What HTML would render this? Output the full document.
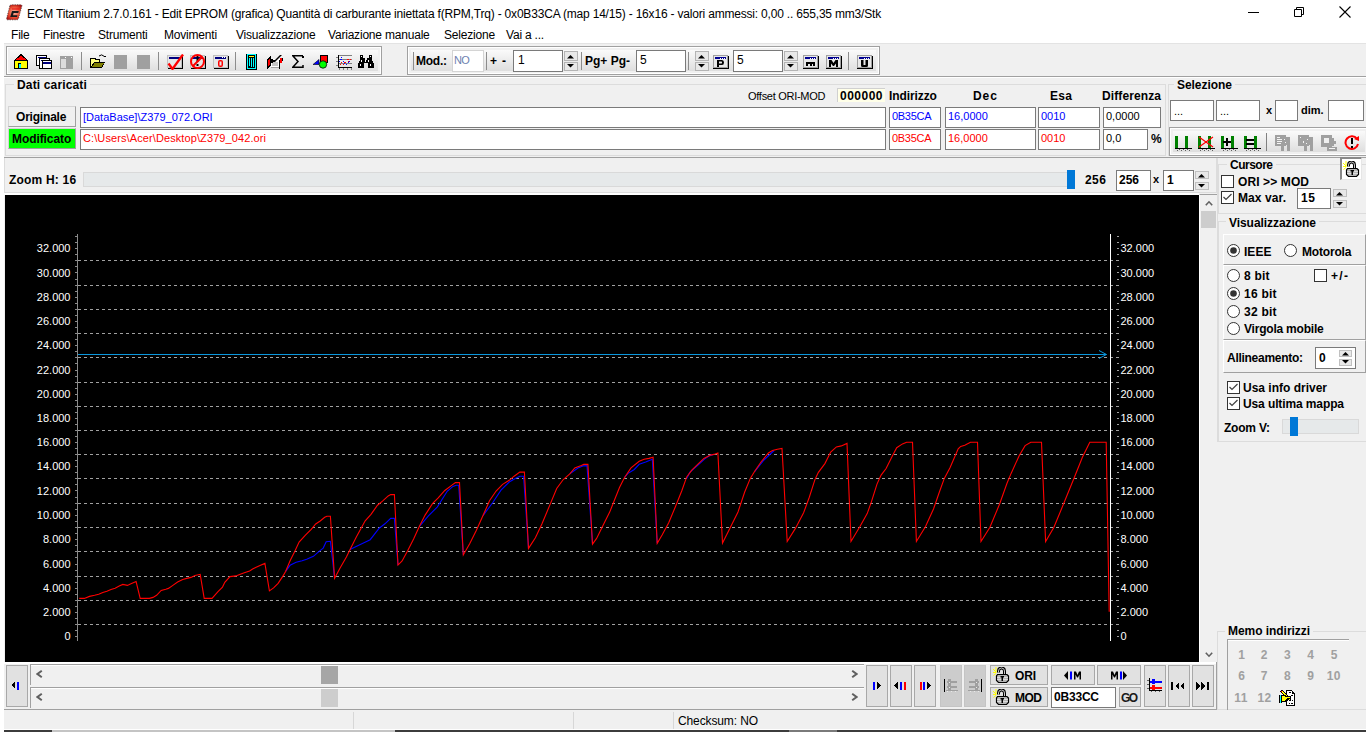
<!DOCTYPE html>
<html><head><meta charset="utf-8">
<style>
*{box-sizing:border-box;margin:0;padding:0}
html,body{width:1366px;height:732px;overflow:hidden;background:#f0f0f0;font-family:"Liberation Sans",sans-serif;color:#000}
.a{position:absolute}
.t{position:absolute;white-space:nowrap;line-height:1}
.b{font-weight:bold}
.fld{position:absolute;background:#fff;border:1px solid #7a7a7a}
.grp{position:absolute;border:1px solid #dcdcdc}
.btn{position:absolute;background:#e1e1e1;border:1px solid #adadad}
.spin{position:absolute;}
.spin i{position:absolute;left:0;width:100%;height:50%;background:#e6e6e6;border:1px solid #c8c8c8}
.tb{position:absolute;top:46px;height:29px;border:1px solid #a0a0a0;background:#f0f0f0}
.tb:before{content:"";position:absolute;left:0;top:0;right:0;bottom:0;border:1px solid #fff}
.tb:after{content:"";position:absolute;left:3px;top:3px;right:3px;bottom:3px;background:linear-gradient(#fafafa,#dedede)}
.sep{position:absolute;width:1px;background:#8c8c8c}
</style></head><body>
<!-- title bar + menu -->
<div class="a" style="left:0;top:0;width:1366px;height:43px;background:#fff"></div>
<div class="a" style="left:0;top:43px;width:1366px;height:1px;background:#e6e6e6"></div>
<div class="t" style="left:27px;top:8px;font-size:12px;letter-spacing:-0.19px">ECM Titanium 2.7.0.161 - Edit EPROM (grafica) Quantità di carburante iniettata f(RPM,Trq) - 0x0B33CA (map 14/15) - 16x16 - valori ammessi: 0,00 .. 655,35 mm3/Stk</div>
<div class="t" style="left:11px;top:29px;font-size:12px;letter-spacing:-0.2px">File</div>
<div class="t" style="left:43px;top:29px;font-size:12px;letter-spacing:-0.2px">Finestre</div>
<div class="t" style="left:98px;top:29px;font-size:12px;letter-spacing:-0.2px">Strumenti</div>
<div class="t" style="left:164px;top:29px;font-size:12px;letter-spacing:-0.2px">Movimenti</div>
<div class="t" style="left:236px;top:29px;font-size:12px;letter-spacing:-0.2px">Visualizzazione</div>
<div class="t" style="left:328px;top:29px;font-size:12px;letter-spacing:-0.2px">Variazione manuale</div>
<div class="t" style="left:444px;top:29px;font-size:12px;letter-spacing:-0.2px">Selezione</div>
<div class="t" style="left:506px;top:29px;font-size:12px;letter-spacing:-0.2px">Vai a ...</div>

<!-- left white strip -->
<div class="a" style="left:0;top:43px;width:4px;height:689px;background:#fff"></div>

<!-- chart black -->
<!-- CHART -->
<svg class="a" style="left:5px;top:195px" width="1195" height="467" viewBox="5 195 1195 467">
<rect x="5" y="195" width="1195" height="467" fill="#000"/>
<path d="M78 260.5H1119.5 M78 285.5H1119.5 M78 309.5H1119.5 M78 333.5H1119.5 M78 357.5H1119.5 M78 382.5H1119.5 M78 406.5H1119.5 M78 430.5H1119.5 M78 454.5H1119.5 M78 478.5H1119.5 M78 503.5H1119.5 M78 527.5H1119.5 M78 551.5H1119.5 M78 576.5H1119.5 M78 600.5H1119.5 M78 624.5H1119.5" stroke="#a0a0a0" stroke-width="1" stroke-dasharray="3 3" fill="none" shape-rendering="crispEdges"/>
<path d="M77.5 234V641" stroke="#8a8a8a" stroke-width="1" shape-rendering="crispEdges"/>
<path d="M75 236.5H77 M75 242.5H77 M75 248.5H77 M75 254.5H77 M75 260.5H77 M75 266.5H77 M75 272.5H77 M75 279.5H77 M75 285.5H77 M75 291.5H77 M75 297.5H77 M75 303.5H77 M75 309.5H77 M75 315.5H77 M75 321.5H77 M75 327.5H77 M75 333.5H77 M75 339.5H77 M75 345.5H77 M75 351.5H77 M75 357.5H77 M75 363.5H77 M75 370.5H77 M75 376.5H77 M75 382.5H77 M75 388.5H77 M75 394.5H77 M75 400.5H77 M75 406.5H77 M75 412.5H77 M75 418.5H77 M75 424.5H77 M75 430.5H77 M75 436.5H77 M75 442.5H77 M75 448.5H77 M75 454.5H77 M75 460.5H77 M75 466.5H77 M75 472.5H77 M75 478.5H77 M75 484.5H77 M75 490.5H77 M75 497.5H77 M75 503.5H77 M75 509.5H77 M75 515.5H77 M75 521.5H77 M75 527.5H77 M75 533.5H77 M75 539.5H77 M75 545.5H77 M75 551.5H77 M75 557.5H77 M75 564.5H77 M75 570.5H77 M75 576.5H77 M75 582.5H77 M75 588.5H77 M75 594.5H77 M75 600.5H77 M75 606.5H77 M75 612.5H77 M75 618.5H77 M75 624.5H77 M75 630.5H77 M75 636.5H77" stroke="#8a8a8a" stroke-width="1" shape-rendering="crispEdges"/>
<path d="M1117 236.5H1119 M1117 242.5H1119 M1117 248.5H1119 M1117 254.5H1119 M1117 260.5H1119 M1117 266.5H1119 M1117 272.5H1119 M1117 279.5H1119 M1117 285.5H1119 M1117 291.5H1119 M1117 297.5H1119 M1117 303.5H1119 M1117 309.5H1119 M1117 315.5H1119 M1117 321.5H1119 M1117 327.5H1119 M1117 333.5H1119 M1117 339.5H1119 M1117 345.5H1119 M1117 351.5H1119 M1117 357.5H1119 M1117 363.5H1119 M1117 370.5H1119 M1117 376.5H1119 M1117 382.5H1119 M1117 388.5H1119 M1117 394.5H1119 M1117 400.5H1119 M1117 406.5H1119 M1117 412.5H1119 M1117 418.5H1119 M1117 424.5H1119 M1117 430.5H1119 M1117 436.5H1119 M1117 442.5H1119 M1117 448.5H1119 M1117 454.5H1119 M1117 460.5H1119 M1117 466.5H1119 M1117 472.5H1119 M1117 478.5H1119 M1117 484.5H1119 M1117 490.5H1119 M1117 497.5H1119 M1117 503.5H1119 M1117 509.5H1119 M1117 515.5H1119 M1117 521.5H1119 M1117 527.5H1119 M1117 533.5H1119 M1117 539.5H1119 M1117 545.5H1119 M1117 551.5H1119 M1117 557.5H1119 M1117 564.5H1119 M1117 570.5H1119 M1117 576.5H1119 M1117 582.5H1119 M1117 588.5H1119 M1117 594.5H1119 M1117 600.5H1119 M1117 606.5H1119 M1117 612.5H1119 M1117 618.5H1119 M1117 624.5H1119 M1117 630.5H1119 M1117 636.5H1119" stroke="#a0a0a0" stroke-width="1" shape-rendering="crispEdges"/>
<path d="M1110.5 234V641" stroke="#fff" stroke-width="1" shape-rendering="crispEdges"/>
<g fill="#fff" font-family="Liberation Sans" font-size="11px"><text x="70.5" y="251.5" text-anchor="end">32.000</text><text x="1120.5" y="251.5">32.000</text><text x="70.5" y="276.5" text-anchor="end">30.000</text><text x="1120.5" y="276.5">30.000</text><text x="70.5" y="300.5" text-anchor="end">28.000</text><text x="1120.5" y="300.5">28.000</text><text x="70.5" y="324.5" text-anchor="end">26.000</text><text x="1120.5" y="324.5">26.000</text><text x="70.5" y="348.5" text-anchor="end">24.000</text><text x="1120.5" y="348.5">24.000</text><text x="70.5" y="373.5" text-anchor="end">22.000</text><text x="1120.5" y="373.5">22.000</text><text x="70.5" y="397.5" text-anchor="end">20.000</text><text x="1120.5" y="397.5">20.000</text><text x="70.5" y="421.5" text-anchor="end">18.000</text><text x="1120.5" y="421.5">18.000</text><text x="70.5" y="445.5" text-anchor="end">16.000</text><text x="1120.5" y="445.5">16.000</text><text x="70.5" y="469.5" text-anchor="end">14.000</text><text x="1120.5" y="469.5">14.000</text><text x="70.5" y="494.5" text-anchor="end">12.000</text><text x="1120.5" y="494.5">12.000</text><text x="70.5" y="518.5" text-anchor="end">10.000</text><text x="1120.5" y="518.5">10.000</text><text x="70.5" y="542.5" text-anchor="end">8.000</text><text x="1120.5" y="542.5">8.000</text><text x="70.5" y="567.5" text-anchor="end">6.000</text><text x="1120.5" y="567.5">6.000</text><text x="70.5" y="591.5" text-anchor="end">4.000</text><text x="1120.5" y="591.5">4.000</text><text x="70.5" y="615.5" text-anchor="end">2.000</text><text x="1120.5" y="615.5">2.000</text><text x="70.5" y="639.5" text-anchor="end">0</text><text x="1120.5" y="639.5">0</text></g>
<path d="M78 354.5H1106.5 M1099 350.5L1106.5 354.5L1099 358.5" stroke="#0a96dc" stroke-width="1" fill="none"/>
<polyline points="285.6,571.4 290.1,565.3 296.1,562.3 302.1,560.8 306.7,559.3 313.4,556.3 319.4,551.1 323.2,548.1 326.2,541.8 330.4,541.3 334.6,578.2" stroke="#0000ff" stroke-width="1.1" fill="none"/>
<polyline points="350.0,549.5 360.3,544.6 370.2,539.7 379.2,528.2 384.9,523.8 390.7,518.4 394.4,518.4 398.0,565.1" stroke="#0000ff" stroke-width="1.1" fill="none"/>
<polyline points="419.3,526.6 428.4,515.9 437.4,506.9 447.2,491.3 453.0,486.4 456.2,485.2 458.7,485.2 463.3,554.9" stroke="#0000ff" stroke-width="1.1" fill="none"/>
<polyline points="483.0,515.6 492.8,502.5 501.0,490.2 509.2,482.0 515.7,478.2 519.8,476.2 523.6,476.2 528.5,548.4" stroke="#0000ff" stroke-width="1.1" fill="none"/>
<polyline points="569.8,473.8 578.0,468.0 583.0,465.9 587.0,465.6 592.5,544.1" stroke="#0000ff" stroke-width="1.1" fill="none"/>
<polyline points="624.4,477.7 627.7,473.6 634.3,469.5 639.2,464.3 645.7,462.1 652.3,459.3 657.2,543.3" stroke="#0000ff" stroke-width="1.1" fill="none"/>
<polyline points="686.7,478.5 690.0,472.0 698.0,465.0 704.8,458.9 709.7,455.6 713.8,454.4" stroke="#0000ff" stroke-width="1.1" fill="none"/>
<polyline points="754.4,471.8 764.0,460.0 774.1,450.5" stroke="#0000ff" stroke-width="1.1" fill="none"/>
<polyline points="79.2,598.4 84.3,598.4 89.5,596.4 94.6,595.3 98.7,594.3 102.8,592.5 106.9,591.2 111.0,589.5 115.1,588.2 119.2,586.1 122.8,584.4 127.4,585.4 131.5,583.6 136.1,581.5 140.2,598.4 149.4,598.4 153.0,597.4 156.6,595.3 161.2,590.4 165.8,589.2 168.4,588.4 172.5,585.6 177.6,582.0 182.7,579.5 186.8,578.4 190.9,577.4 195.0,575.4 200.2,574.3 204.2,598.4 212.0,598.4 218.0,591.6 222.5,587.1 224.8,582.3 230.0,576.6 236.0,575.9 239.0,574.7 243.6,572.9 249.6,570.9 252.6,569.1 255.6,567.6 260.0,565.6 264.9,563.4 269.4,590.9 273.6,587.9 278.1,583.4 282.6,576.6 285.6,571.4 290.1,560.8 294.6,551.8 299.1,542.1 305.2,535.3 311.2,529.3 315.7,524.0 320.2,521.0 324.7,517.3 326.9,516.2 330.4,516.2 334.6,578.2 339.8,568.4 346.4,556.9 351.3,547.0 356.2,537.2 361.1,528.2 365.2,520.8 371.0,514.3 377.5,505.2 382.5,501.1 388.2,495.9 390.7,494.6 394.4,494.6 398.0,565.1 402.1,561.0 407.9,550.3 413.6,538.9 419.3,526.6 425.1,515.1 432.5,503.6 438.2,497.9 444.8,490.5 451.3,485.6 455.4,482.6 459.5,482.6 463.3,554.9 469.8,543.4 476.4,530.3 483.0,515.6 489.5,500.8 496.1,491.0 502.6,484.4 509.2,480.3 514.1,476.2 519.8,472.1 524.4,472.1 528.5,548.4 535.4,537.7 542.0,523.8 550.2,504.1 556.7,488.5 563.3,479.5 569.8,473.8 574.8,468.0 581.3,465.6 583.8,464.4 587.9,464.4 592.5,544.1 596.6,538.4 603.1,525.2 609.7,512.1 614.6,499.8 619.5,487.5 624.4,477.7 631.0,467.9 639.2,461.3 644.1,459.3 649.0,458.4 653.1,457.2 657.2,543.3 662.1,535.1 668.7,522.8 675.2,507.2 681.8,490.8 686.7,476.9 691.6,470.3 698.2,463.8 703.9,458.4 710.5,455.1 713.8,454.4 717.9,453.1 722.5,543.1 729.8,528.4 738.0,512.0 744.6,492.3 750.3,478.4 754.4,471.8 761.0,462.0 768.4,453.0 772.5,450.5 777.4,449.3 782.0,448.4 787.2,541.5 795.4,528.4 803.6,512.8 809.3,497.2 815.1,479.2 818.4,472.3 824.9,463.6 830.7,452.1 836.4,446.9 841.3,445.9 847.0,443.4 851.0,541.5 859.8,526.7 867.2,513.6 871.3,502.1 877.0,484.1 881.1,475.1 886.1,468.5 892.6,455.4 896.7,447.7 902.5,443.9 906.6,442.3 912.5,442.3 916.4,541.5 925.4,526.7 933.6,508.7 939.3,492.3 944.3,478.4 950.0,467.7 958.2,448.9 960.7,446.4 964.8,445.2 970.5,442.3 977.5,442.3 981.0,541.5 989.8,527.5 999.7,503.8 1007.0,483.3 1011.1,473.4 1019.3,455.4 1025.1,445.6 1030.8,442.3 1041.5,442.3 1045.6,541.5 1053.8,527.5 1063.6,503.8 1074.3,477.5 1082.5,457.0 1089.8,442.3 1106.2,442.3 1109.2,611.7" stroke="#ff0000" stroke-width="1.1" fill="none"/>
</svg>
<!-- /CHART -->


<!-- title icon -->
<svg class="a" style="left:5px;top:4px" width="18" height="17" viewBox="0 0 18 17"><defs><radialGradient id="tg" cx="0.5" cy="0.5" r="0.6"><stop offset="0" stop-color="#f8c0a8"/><stop offset="0.6" stop-color="#e84a30"/><stop offset="1" stop-color="#b01010"/></radialGradient></defs><path d="M5 1.5 Q5.5 0.8 6.5 0.8 H16 Q17.3 0.8 16.8 2.2 L13.5 14.5 Q13 15.8 11.8 15.8 H2.5 Q1.2 15.8 1.6 14.5 L4.8 2 Z" fill="url(#tg)" stroke="#333" stroke-width="0.7" stroke-dasharray="1.2 1.2"/><path d="M7 5 H14.5" stroke="#ee0a0a" stroke-width="1"/><path d="M7 7 H13.8 L13.3 9 H8.6 L8 11.3 H12.5 L12 13 H5.2 Z" fill="#1a1a1a"/></svg>
<!-- window controls -->
<div class="a" style="left:1248px;top:12px;width:11px;height:1px;background:#000"></div>
<svg class="a" style="left:1293px;top:6px" width="12" height="12" viewBox="0 0 12 12"><path d="M1.5 3.5h7v7h-7z M3.5 3.5v-2h7v7h-2" fill="none" stroke="#000" stroke-width="1"/></svg>
<svg class="a" style="left:1339px;top:6px" width="12" height="12" viewBox="0 0 12 12"><path d="M0.5 0.5L11.5 11.5M11.5 0.5L0.5 11.5" stroke="#000" stroke-width="1.1"/></svg>

<!-- toolbar strip -->
<div class="a" style="left:4px;top:43px;width:1362px;height:1px;background:#e3e3e3"></div>
<div class="a" style="left:4px;top:76px;width:1362px;height:1px;background:#a0a0a0"></div>
<div class="a" style="left:4px;top:77px;width:1362px;height:1px;background:#fff"></div>
<div class="tb" style="left:6px;width:376px"></div>
<div class="tb" style="left:407px;width:473px"></div>

<!-- toolbar icons -->
<svg class="a" style="left:13px;top:54px" width="17" height="16" viewBox="0 0 17 16" shape-rendering="crispEdges"><path d="M8 0 L16 7 L15 7 L15 15 L1 15 L1 7 L0 7 Z" fill="#000"/><path d="M8 1.5 L13.5 6 L2.5 6 Z" fill="#ff0000"/><rect x="2" y="7" width="12" height="7" fill="#ffff00"/><rect x="5" y="9" width="3" height="5" fill="#000"/><rect x="6" y="10" width="1.5" height="4" fill="#00ffff"/></svg>
<svg class="a" style="left:36px;top:55px" width="17" height="15" viewBox="0 0 17 15" shape-rendering="crispEdges"><rect x="0" y="0" width="11" height="11" fill="#000"/><rect x="1" y="1" width="9" height="9" fill="#fff"/><rect x="2" y="2" width="8" height="1" fill="#000080"/><rect x="3" y="3" width="11" height="11" fill="#000"/><rect x="4" y="4" width="9" height="9" fill="#fff"/><rect x="5" y="5" width="8" height="1" fill="#000080"/><rect x="6" y="5" width="10" height="9" fill="#000"/><rect x="7" y="6" width="8" height="7" fill="#fff"/><rect x="7" y="7" width="8" height="2" fill="#000080"/></svg>
<svg class="a" style="left:60px;top:56px" width="14" height="14" viewBox="0 0 14 14" shape-rendering="crispEdges"><rect x="0" y="0" width="13" height="13" fill="#a0a0a0"/><rect x="1" y="3" width="5" height="9" fill="#dcdcdc"/><rect x="5" y="1" width="1" height="1" fill="#fff"/><rect x="11" y="1" width="1" height="1" fill="#fff"/></svg>
<div class="sep" style="left:81px;top:52px;height:18px"></div>
<svg class="a" style="left:90px;top:54px" width="17" height="15" viewBox="0 0 17 15" shape-rendering="crispEdges"><path d="M0 4 H5 L6 5 H10 V8 H15 L12 14 H0 Z" fill="#000"/><path d="M1 5 H4.5 L5.5 6 H9 V8 H4 L1 13 Z" fill="#ffff80"/><path d="M4.5 9 H14 L11.5 13 H2 Z" fill="#808000"/><path d="M9 2 Q11.5 -0.5 14.5 2.5" fill="none" stroke="#000" stroke-width="1" shape-rendering="auto"/><path d="M13 3 H16 L15 1 Z" fill="#000"/></svg>
<svg class="a" style="left:114px;top:55px" width="14" height="14" viewBox="0 0 14 14" shape-rendering="crispEdges"><rect x="0" y="0" width="13" height="14" fill="#a0a0a0"/></svg>
<svg class="a" style="left:137px;top:55px" width="14" height="14" viewBox="0 0 14 14" shape-rendering="crispEdges"><rect x="0" y="0" width="13" height="14" fill="#a0a0a0"/></svg>
<div class="sep" style="left:158px;top:52px;height:18px"></div>
<svg class="a" style="left:167px;top:54px" width="17" height="16" viewBox="0 0 17 16" shape-rendering="auto"><rect x="0" y="1" width="15" height="13" fill="#c0c0c0"/><rect x="1" y="2" width="13" height="11" fill="#e6e6e6"/><rect x="2" y="3" width="11" height="2" fill="#000080"/><rect x="1" y="14" width="15" height="1" fill="#000"/><rect x="15" y="2" width="1" height="13" fill="#000"/><path d="M1.5 9.5 L5.5 15 L16 0.5" fill="none" stroke="#ff0000" stroke-width="2.3" shape-rendering="auto"/></svg>
<svg class="a" style="left:190px;top:54px" width="17" height="16" viewBox="0 0 17 16" shape-rendering="auto"><rect x="0" y="1" width="15" height="13" fill="#c0c0c0"/><rect x="1" y="2" width="13" height="11" fill="#e6e6e6"/><rect x="2" y="3" width="11" height="2" fill="#000080"/><rect x="1" y="14" width="15" height="1" fill="#000"/><rect x="15" y="2" width="1" height="13" fill="#000"/><rect x="6.5" y="2" width="2" height="6" fill="#000"/><rect x="6.5" y="10" width="2" height="2" fill="#000"/><circle cx="7.5" cy="7.5" r="6.5" fill="none" stroke="#ff0000" stroke-width="2" shape-rendering="auto"/><path d="M3 12 L12 3" stroke="#ff0000" stroke-width="2" shape-rendering="auto"/></svg>
<svg class="a" style="left:213px;top:54px" width="17" height="16" viewBox="0 0 17 16" shape-rendering="auto"><rect x="0" y="1" width="15" height="13" fill="#c0c0c0"/><rect x="1" y="2" width="13" height="11" fill="#e6e6e6"/><rect x="2" y="3" width="11" height="2" fill="#000080"/><rect x="1" y="14" width="15" height="1" fill="#000"/><rect x="15" y="2" width="1" height="13" fill="#000"/><rect x="11" y="3" width="1" height="1" fill="#fff"/><rect x="9" y="3" width="1" height="1" fill="#fff"/><rect x="5" y="6" width="5" height="7" rx="2" fill="#ff0000"/><rect x="6.5" y="7.5" width="2" height="4" fill="#e6e6e6"/></svg>
<div class="sep" style="left:235px;top:52px;height:18px"></div>
<svg class="a" style="left:246px;top:54px" width="11" height="16" viewBox="0 0 11 16" shape-rendering="crispEdges"><rect x="0" y="0" width="11" height="16" fill="#000"/><rect x="1" y="0" width="9" height="15" fill="#00ffff"/><rect x="2" y="1" width="7" height="13" fill="#000"/><rect x="3" y="2" width="5" height="1" fill="#ffff00"/><rect x="3" y="4" width="1" height="8" fill="#00ffff"/><rect x="5" y="4" width="1" height="9" fill="#00ffff"/><rect x="7" y="4" width="1" height="9" fill="#00ffff"/></svg>
<svg class="a" style="left:267px;top:54px" width="17" height="16" viewBox="0 0 17 16" shape-rendering="crispEdges"><path d="M0 15 V6 L4 1.5 V11 Z" fill="#000"/><path d="M1 13 V6.5 L3 4 V10.5 Z" fill="#ff0000"/><rect x="4" y="5" width="9" height="9" fill="#fff"/><rect x="5" y="8" width="6" height="4" fill="#c4c4c4"/><rect x="4" y="13" width="9" height="1" fill="#a0a0a0"/><rect x="4" y="5" width="2" height="4" fill="#000"/><rect x="6" y="6" width="2" height="2" fill="#000"/><path d="M6 8 L13 1 L15 1 L8 8 Z" fill="#000" shape-rendering="auto"/><rect x="12" y="6" width="1" height="9" fill="#000"/><rect x="13" y="4" width="2" height="5" fill="#ff0000"/><rect x="15" y="4" width="1" height="3" fill="#000"/></svg>
<svg class="a" style="left:292px;top:55px" width="12" height="14" viewBox="0 0 12 14" shape-rendering="crispEdges"><path d="M11 0.8 H0.8 L6 6.5 L0.8 12.2 H11 V10" fill="none" stroke="#000" stroke-width="1.5" shape-rendering="auto"/><path d="M11 0.8 V3" stroke="#000" stroke-width="1.5"/></svg>
<svg class="a" style="left:313px;top:55px" width="16" height="14" viewBox="0 0 16 14" shape-rendering="crispEdges"><rect x="7" y="0" width="8" height="8" fill="#000"/><rect x="8" y="1" width="6" height="6" fill="#ff0000"/><path d="M0 9.5 L6 4.5 V9.5 Z" fill="#0000ff" stroke="#000" stroke-width="0.6" shape-rendering="auto"/><circle cx="10" cy="9.5" r="3.7" fill="#00ff00" stroke="#000" stroke-width="0.8" shape-rendering="auto"/></svg>
<svg class="a" style="left:336px;top:55px" width="16" height="15" viewBox="0 0 16 15" shape-rendering="crispEdges"><rect x="2" y="0" width="1" height="13" fill="#000"/><rect x="2" y="12" width="14" height="1" fill="#000"/><rect x="3" y="0" width="13" height="1" fill="#808080"/><rect x="3" y="4" width="13" height="1" fill="#808080"/><rect x="3" y="8" width="13" height="1" fill="#808080"/><rect x="0" y="2" width="2" height="1" fill="#808080"/><rect x="0" y="6" width="2" height="1" fill="#808080"/><rect x="0" y="10" width="2" height="1" fill="#808080"/><rect x="3" y="13" width="1" height="2" fill="#808080"/><rect x="7" y="13" width="1" height="2" fill="#808080"/><rect x="11" y="13" width="1" height="2" fill="#808080"/><rect x="15" y="13" width="1" height="2" fill="#808080"/><g fill="#0000ff"><rect x="5" y="2" width="1" height="1"/><rect x="4" y="4" width="2" height="1"/><rect x="3" y="6" width="1" height="1"/><rect x="7" y="6" width="1" height="1"/><rect x="10" y="9" width="1" height="1"/><rect x="12" y="7" width="1" height="1"/><rect x="14" y="4" width="1" height="1"/><rect x="13" y="6" width="1" height="1"/><rect x="8" y="8" width="1" height="1"/></g><g fill="#ff0000"><rect x="5" y="7" width="1" height="1"/><rect x="4" y="9" width="1" height="1"/><rect x="7" y="9" width="1" height="1"/><rect x="8" y="7" width="2" height="1"/><rect x="11" y="4" width="2" height="1"/><rect x="14" y="4" width="1" height="1"/><rect x="12" y="6" width="1" height="1"/></g></svg>
<svg class="a" style="left:358px;top:55px" width="16" height="13" viewBox="0 0 16 13" shape-rendering="crispEdges"><path d="M2 0 H5 V3 H7 V5 H9 V3 H11 V0 H14 V5 L16 9 V13 H10 V8 H6 V13 H0 V9 L2 5 Z" fill="#000"/><rect x="1.5" y="9" width="1" height="2" fill="#fff"/><rect x="3" y="5" width="1" height="2" fill="#fff"/><rect x="12" y="9" width="1" height="2" fill="#fff"/><rect x="10" y="5" width="1" height="2" fill="#fff"/><rect x="3" y="1" width="1" height="1" fill="#fff"/><rect x="12" y="1" width="1" height="1" fill="#fff"/><rect x="7" y="5" width="1" height="2" fill="#fff"/></svg>

<!-- toolbar group2 -->
<div class="sep" style="left:413px;top:52px;height:18px"></div>
<div class="t b" style="left:416px;top:55px;font-size:12px;letter-spacing:-0.25px">Mod.:</div>
<div class="a" style="left:452px;top:50px;width:32px;height:22px;background:#fff;border:1px solid #d4d4d4"></div>
<div class="t" style="left:454px;top:55px;font-size:11px;color:#6d7fb0;letter-spacing:-0.8px">NO</div>
<div class="sep" style="left:486px;top:52px;height:18px"></div>
<div class="t b" style="left:490px;top:55px;font-size:12px;letter-spacing:0.8px">+ -</div>
<div class="fld" style="left:513px;top:50px;width:50px;height:22px"></div>
<div class="t" style="left:518px;top:54px;font-size:12px">1</div>
<div class="a" style="left:564px;top:51px;width:14px;height:10px;background:#e8e8e8;border:1px solid #b4b4b4"></div><div class="a" style="left:564px;top:62px;width:14px;height:9px;background:#e8e8e8;border:1px solid #b4b4b4"></div><svg class="a" style="left:567px;top:55px" width="7" height="4" viewBox="0 0 7 4" shape-rendering="crispEdges"><path d="M0 3.5 L3.5 0 L7 3.5Z" fill="#000" shape-rendering="auto"/></svg>
<svg class="a" style="left:567px;top:64px" width="7" height="4" viewBox="0 0 7 4" shape-rendering="crispEdges"><path d="M0 0 L3.5 3.5 L7 0Z" fill="#000" shape-rendering="auto"/></svg>

<div class="sep" style="left:581px;top:52px;height:18px"></div>
<div class="t b" style="left:585px;top:55px;font-size:12px">Pg+ Pg-</div>
<div class="fld" style="left:636px;top:50px;width:50px;height:22px"></div>
<div class="t" style="left:640px;top:54px;font-size:12px">5</div>
<div class="sep" style="left:688px;top:52px;height:18px"></div>
<div class="a" style="left:695px;top:51px;width:14px;height:10px;background:#e8e8e8;border:1px solid #b4b4b4"></div><div class="a" style="left:695px;top:62px;width:14px;height:9px;background:#e8e8e8;border:1px solid #b4b4b4"></div><svg class="a" style="left:698px;top:55px" width="7" height="4" viewBox="0 0 7 4" shape-rendering="crispEdges"><path d="M0 3.5 L3.5 0 L7 3.5Z" fill="#000" shape-rendering="auto"/></svg>
<svg class="a" style="left:698px;top:64px" width="7" height="4" viewBox="0 0 7 4" shape-rendering="crispEdges"><path d="M0 0 L3.5 3.5 L7 0Z" fill="#000" shape-rendering="auto"/></svg>

<svg class="a" style="left:713px;top:55px" width="16" height="14" viewBox="0 0 16 14" shape-rendering="crispEdges"><rect x="0" y="0" width="15" height="13" fill="#a0a0a0"/><rect x="1" y="1" width="13" height="11" fill="#e8e8e8"/><rect x="2" y="2" width="11" height="2" fill="#000090"/><rect x="9" y="3" width="1" height="1" fill="#fff"/><rect x="11" y="3" width="1" height="1" fill="#fff"/><rect x="7" y="3" width="1" height="1" fill="#fff"/><rect x="0" y="13" width="16" height="1" fill="#000"/><rect x="15" y="1" width="1" height="13" fill="#000"/><path d="M4 5 H9 Q11 5 11 7.5 Q11 10 9 10 H6 V12 H4 Z M6 6.5 V8.5 H8.5 Q9 8.5 9 7.5 Q9 6.5 8.5 6.5Z" fill="#000" fill-rule="evenodd" shape-rendering="auto"/></svg>
<div class="fld" style="left:733px;top:50px;width:50px;height:22px"></div>
<div class="t" style="left:737px;top:54px;font-size:12px">5</div>
<div class="a" style="left:784px;top:51px;width:14px;height:10px;background:#e8e8e8;border:1px solid #b4b4b4"></div><div class="a" style="left:784px;top:62px;width:14px;height:9px;background:#e8e8e8;border:1px solid #b4b4b4"></div><svg class="a" style="left:787px;top:55px" width="7" height="4" viewBox="0 0 7 4" shape-rendering="crispEdges"><path d="M0 3.5 L3.5 0 L7 3.5Z" fill="#000" shape-rendering="auto"/></svg>
<svg class="a" style="left:787px;top:64px" width="7" height="4" viewBox="0 0 7 4" shape-rendering="crispEdges"><path d="M0 0 L3.5 3.5 L7 0Z" fill="#000" shape-rendering="auto"/></svg>

<svg class="a" style="left:803px;top:55px" width="16" height="14" viewBox="0 0 16 14" shape-rendering="crispEdges"><rect x="0" y="0" width="15" height="13" fill="#a0a0a0"/><rect x="1" y="1" width="13" height="11" fill="#e8e8e8"/><rect x="2" y="2" width="11" height="2" fill="#000090"/><rect x="9" y="3" width="1" height="1" fill="#fff"/><rect x="11" y="3" width="1" height="1" fill="#fff"/><rect x="7" y="3" width="1" height="1" fill="#fff"/><rect x="0" y="13" width="16" height="1" fill="#000"/><rect x="15" y="1" width="1" height="13" fill="#000"/><path d="M3 7 H10 Q12 7 12 9 V11 H10 V9 H8.5 V11 H6.5 V9 H5 V11 H3 Z" fill="#000"/></svg>
<svg class="a" style="left:826px;top:55px" width="16" height="14" viewBox="0 0 16 14" shape-rendering="crispEdges"><rect x="0" y="0" width="15" height="13" fill="#a0a0a0"/><rect x="1" y="1" width="13" height="11" fill="#e8e8e8"/><rect x="2" y="2" width="11" height="2" fill="#000090"/><rect x="9" y="3" width="1" height="1" fill="#fff"/><rect x="11" y="3" width="1" height="1" fill="#fff"/><rect x="7" y="3" width="1" height="1" fill="#fff"/><rect x="0" y="13" width="16" height="1" fill="#000"/><rect x="15" y="1" width="1" height="13" fill="#000"/><path d="M3 5 H5.5 L7.5 8 L9.5 5 H12 V12 H10 V8.5 L8 11 H7 L5 8.5 V12 H3 Z" fill="#000" shape-rendering="auto"/></svg>
<div class="sep" style="left:848px;top:52px;height:18px"></div>
<svg class="a" style="left:857px;top:55px" width="16" height="14" viewBox="0 0 16 14" shape-rendering="crispEdges"><rect x="0" y="0" width="15" height="13" fill="#a0a0a0"/><rect x="1" y="1" width="13" height="11" fill="#e8e8e8"/><rect x="2" y="2" width="11" height="2" fill="#000090"/><rect x="9" y="3" width="1" height="1" fill="#fff"/><rect x="11" y="3" width="1" height="1" fill="#fff"/><rect x="7" y="3" width="1" height="1" fill="#fff"/><rect x="0" y="13" width="16" height="1" fill="#000"/><rect x="15" y="1" width="1" height="13" fill="#000"/><path d="M4 5 H6.5 V10 H8.5 V5 H11 V10.5 Q11 12 9.5 12 H5.5 Q4 12 4 10.5 Z" fill="#000" shape-rendering="auto"/></svg>


<!-- panel 1 -->
<div class="grp" style="left:5px;top:84px;width:1161px;height:72px"></div>
<div class="t b" style="left:14px;top:79px;font-size:12px;padding:0 3px;background:#f0f0f0;letter-spacing:0.15px">Dati caricati</div>
<div class="t" style="left:748px;top:91px;font-size:11px;letter-spacing:-0.28px">Offset ORI-MOD</div>
<div class="a" style="left:837px;top:88px;width:48px;height:14px;background:#ffffe8;border-top:1px solid #d0d0d0;border-left:1px solid #d0d0d0"></div>
<div class="t b" style="left:840px;top:90px;font-size:12px;letter-spacing:0.5px">000000</div>
<div class="t b" style="left:889px;top:90px;font-size:12px;letter-spacing:-0.1px">Indirizzo</div>
<div class="t b" style="left:973px;top:90px;font-size:12px;letter-spacing:0.9px">Dec</div>
<div class="t b" style="left:1050px;top:90px;font-size:12px;letter-spacing:0.3px">Esa</div>
<div class="t b" style="left:1102px;top:90px;font-size:12px;letter-spacing:0.1px">Differenza</div>
<div class="btn" style="left:8px;top:106px;width:68px;height:21px;background:#f0f0f0;border-color:#d4d4d4 #a0a0a0 #a0a0a0 #d4d4d4"></div>
<div class="t b" style="left:16px;top:111px;font-size:12px;letter-spacing:-0.2px">Originale</div>
<div class="btn" style="left:8px;top:128px;width:68px;height:21px;background:#00ff00;border-color:#d4d4d4 #a0a0a0 #a0a0a0 #d4d4d4"></div>
<div class="t b" style="left:12px;top:133px;font-size:12px;letter-spacing:-0.08px">Modificato</div>
<div class="fld" style="left:80px;top:107px;width:806px;height:21px"></div>
<div class="fld" style="left:80px;top:129px;width:806px;height:21px"></div>
<div class="t" style="left:83px;top:112px;font-size:11px;color:#0000ff">[DataBase]\Z379_072.ORI</div>
<div class="t" style="left:83px;top:133px;font-size:11px;color:#ff0000;letter-spacing:0.1px">C:\Users\Acer\Desktop\Z379_042.ori</div>
<div class="fld" style="left:889px;top:107px;width:52px;height:21px"></div>
<div class="fld" style="left:889px;top:129px;width:52px;height:21px"></div>
<div class="t" style="left:892px;top:111px;font-size:11px;color:#0000ff;letter-spacing:-0.3px">0B35CA</div>
<div class="t" style="left:892px;top:133px;font-size:11px;color:#ff0000;letter-spacing:-0.3px">0B35CA</div>
<div class="fld" style="left:945px;top:107px;width:91px;height:21px"></div>
<div class="fld" style="left:945px;top:129px;width:91px;height:21px"></div>
<div class="t" style="left:948px;top:111px;font-size:11px;color:#0000ff">16,0000</div>
<div class="t" style="left:948px;top:133px;font-size:11px;color:#ff0000">16,0000</div>
<div class="fld" style="left:1038px;top:107px;width:62px;height:21px"></div>
<div class="fld" style="left:1038px;top:129px;width:62px;height:21px"></div>
<div class="t" style="left:1041px;top:111px;font-size:11px;color:#0000ff">0010</div>
<div class="t" style="left:1041px;top:133px;font-size:11px;color:#ff0000">0010</div>
<div class="fld" style="left:1103px;top:107px;width:58px;height:21px"></div>
<div class="fld" style="left:1103px;top:129px;width:45px;height:21px"></div>
<div class="t" style="left:1106px;top:111px;font-size:11px">0,0000</div>
<div class="t" style="left:1106px;top:133px;font-size:11px">0,0</div>
<div class="t b" style="left:1151px;top:133px;font-size:12px">%</div>

<!-- selezione -->
<div class="grp" style="left:1168px;top:84px;width:205px;height:72px"></div>
<div class="t b" style="left:1174px;top:79px;font-size:12px;padding:0 3px;background:#f0f0f0;letter-spacing:-0.05px">Selezione</div>
<div class="fld" style="left:1170px;top:100px;width:44px;height:21px"></div>
<div class="fld" style="left:1216px;top:100px;width:44px;height:21px"></div>
<div class="t" style="left:1174px;top:106px;font-size:11px">...</div>
<div class="t" style="left:1220px;top:106px;font-size:11px">...</div>
<div class="t b" style="left:1266px;top:105px;font-size:11px">x</div>
<div class="fld" style="left:1275px;top:100px;width:23px;height:21px"></div>
<div class="t b" style="left:1301px;top:105px;font-size:11px">dim.</div>
<div class="fld" style="left:1328px;top:100px;width:36px;height:21px"></div>
<div class="tb" style="left:1169px;top:127px;width:200px;height:29px"></div>

<!-- selezione icons -->
<svg class="a" style="left:1175px;top:136px" width="17" height="16" viewBox="0 0 17 16" shape-rendering="crispEdges"><rect x="0" y="0" width="3" height="12" fill="#008000"/><rect x="10" y="0" width="3" height="12" fill="#008000"/><rect x="0" y="12" width="17" height="1" fill="#000"/><g fill="#606060"><rect x="2" y="14" width="1" height="1"/><rect x="6" y="14" width="1" height="1"/><rect x="10" y="14" width="1" height="1"/><rect x="14" y="14" width="1" height="1"/><rect x="4" y="13" width="1" height="1"/><rect x="8" y="13" width="1" height="1"/><rect x="12" y="13" width="1" height="1"/></g></svg>
<svg class="a" style="left:1198px;top:136px" width="17" height="16" viewBox="0 0 17 16" shape-rendering="crispEdges"><rect x="0" y="0" width="3" height="12" fill="#008000"/><rect x="10" y="0" width="3" height="12" fill="#008000"/><rect x="0" y="12" width="17" height="1" fill="#000"/><g fill="#606060"><rect x="2" y="14" width="1" height="1"/><rect x="6" y="14" width="1" height="1"/><rect x="10" y="14" width="1" height="1"/><rect x="14" y="14" width="1" height="1"/><rect x="4" y="13" width="1" height="1"/><rect x="8" y="13" width="1" height="1"/><rect x="12" y="13" width="1" height="1"/></g><path d="M1 1 L15 11 M1 11 L15 1" stroke="#ff0000" stroke-width="1.2" fill="none" shape-rendering="auto"/></svg>
<svg class="a" style="left:1221px;top:136px" width="17" height="16" viewBox="0 0 17 16" shape-rendering="crispEdges"><rect x="0" y="0" width="3" height="12" fill="#008000"/><rect x="10" y="0" width="3" height="12" fill="#008000"/><rect x="0" y="12" width="17" height="1" fill="#000"/><g fill="#606060"><rect x="2" y="14" width="1" height="1"/><rect x="6" y="14" width="1" height="1"/><rect x="10" y="14" width="1" height="1"/><rect x="14" y="14" width="1" height="1"/><rect x="4" y="13" width="1" height="1"/><rect x="8" y="13" width="1" height="1"/><rect x="12" y="13" width="1" height="1"/></g><rect x="5" y="2" width="2" height="8" fill="#000"/><rect x="2" y="5" width="8" height="2" fill="#000"/></svg>
<svg class="a" style="left:1244px;top:136px" width="17" height="16" viewBox="0 0 17 16" shape-rendering="crispEdges"><rect x="0" y="0" width="3" height="12" fill="#008000"/><rect x="10" y="0" width="3" height="12" fill="#008000"/><rect x="0" y="12" width="17" height="1" fill="#000"/><g fill="#606060"><rect x="2" y="14" width="1" height="1"/><rect x="6" y="14" width="1" height="1"/><rect x="10" y="14" width="1" height="1"/><rect x="14" y="14" width="1" height="1"/><rect x="4" y="13" width="1" height="1"/><rect x="8" y="13" width="1" height="1"/><rect x="12" y="13" width="1" height="1"/></g><rect x="2" y="3" width="8" height="2" fill="#000"/><rect x="2" y="7" width="8" height="2" fill="#000"/></svg>
<div class="sep" style="left:1266px;top:133px;height:18px;background:#808080"></div>
<svg class="a" style="left:1275px;top:135px" width="17" height="17" viewBox="0 0 17 17" shape-rendering="crispEdges"><rect x="0" y="0" width="11" height="11" fill="#a0a0a0"/><rect x="6" y="2" width="9" height="8" fill="#a0a0a0"/><rect x="6" y="10" width="3" height="6" fill="#a0a0a0"/><rect x="12" y="10" width="3" height="6" fill="#a0a0a0"/><g fill="#f4f4f4"><rect x="2" y="2" width="3" height="1"/><rect x="2" y="4" width="5" height="1"/><rect x="2" y="6" width="5" height="1"/><rect x="2" y="8" width="4" height="1"/><rect x="9" y="4" width="1" height="1"/><rect x="10" y="7" width="1" height="1"/></g></svg>
<svg class="a" style="left:1298px;top:135px" width="17" height="17" viewBox="0 0 17 17" shape-rendering="crispEdges"><rect x="0" y="0" width="11" height="11" fill="#a0a0a0"/><rect x="6" y="2" width="9" height="8" fill="#a0a0a0"/><rect x="6" y="10" width="3" height="6" fill="#a0a0a0"/><rect x="12" y="10" width="3" height="6" fill="#a0a0a0"/><g fill="#f4f4f4"><rect x="2" y="2" width="1" height="1"/><rect x="5" y="6" width="1" height="2"/><rect x="9" y="4" width="1" height="1"/><rect x="8" y="8" width="1" height="1"/></g></svg>
<svg class="a" style="left:1321px;top:135px" width="17" height="17" viewBox="0 0 17 17" shape-rendering="crispEdges"><rect x="0" y="0" width="11" height="12" fill="#a0a0a0"/><rect x="3" y="3" width="5" height="5" fill="#f0f0f0"/><rect x="11" y="3" width="2" height="8" fill="#a0a0a0"/><rect x="12" y="6" width="3" height="3" fill="#a0a0a0"/><rect x="6" y="12" width="10" height="4" fill="#a0a0a0"/><rect x="8" y="13" width="6" height="1" fill="#f4f4f4"/></svg>
<svg class="a" style="left:1344px;top:135px" width="16" height="16" viewBox="0 0 16 16" shape-rendering="crispEdges"><path d="M13 4 A6.3 6.3 0 1 0 14 9" fill="none" stroke="#ff0000" stroke-width="2" shape-rendering="auto"/><path d="M10 4 L15 1 V6 Z" fill="#ff0000" shape-rendering="auto"/><rect x="6.5" y="3" width="2" height="6" fill="#000"/><rect x="6.5" y="10.5" width="2" height="2" fill="#000"/></svg>
<!-- zoom row -->
<div class="a" style="left:4px;top:157px;width:1362px;height:1px;background:#a0a0a0"></div>
<div class="a" style="left:4px;top:158px;width:1213px;height:35px;border:1px solid #dcdcdc;border-top:none"></div>
<div class="a" style="left:4px;top:193px;width:1195px;height:2px;background:#fff"></div>
<div class="t b" style="left:9px;top:174px;font-size:12px;letter-spacing:0.2px">Zoom H: 16</div>
<div class="a" style="left:83px;top:172px;width:985px;height:15px;background:#e6e9ea;border:1px solid #d9d9d9"></div>
<div class="a" style="left:1067px;top:170px;width:8px;height:19px;background:#0078d7"></div>
<div class="t b" style="left:1085px;top:174px;font-size:12px;letter-spacing:0.4px">256</div>
<div class="fld" style="left:1116px;top:170px;width:35px;height:21px"></div>
<div class="t b" style="left:1119px;top:174px;font-size:12px">256</div>
<div class="t b" style="left:1153px;top:174px;font-size:11px">x</div>
<div class="fld" style="left:1163px;top:170px;width:31px;height:21px"></div>
<div class="t b" style="left:1167px;top:174px;font-size:12px">1</div>
<div class="a" style="left:1195px;top:171px;width:14px;height:8px;background:#e8e8e8;border:1px solid #c0c0c0"></div><div class="a" style="left:1195px;top:182px;width:14px;height:8px;background:#e8e8e8;border:1px solid #c0c0c0"></div><svg class="a" style="left:1198px;top:174px" width="7" height="4" viewBox="0 0 7 4" shape-rendering="crispEdges"><path d="M0 3.5 L3.5 0 L7 3.5Z" fill="#000" shape-rendering="auto"/></svg>
<svg class="a" style="left:1198px;top:184px" width="7" height="4" viewBox="0 0 7 4" shape-rendering="crispEdges"><path d="M0 0 L3.5 3.5 L7 0Z" fill="#000" shape-rendering="auto"/></svg>


<!-- right panel -->
<div class="a" style="left:1217px;top:158px;width:149px;height:284px;border-left:1px solid #dcdcdc;border-bottom:1px solid #dcdcdc"></div>
<div class="grp" style="left:1218px;top:164px;width:160px;height:50px"></div>
<div class="t b" style="left:1227px;top:159px;font-size:12px;letter-spacing:-0.50px;padding:0 3px;background:#f0f0f0">Cursore</div>
<div class="a" style="left:1340px;top:157px;width:22px;height:23px;background:#fff;border-top:2px solid #888;border-left:2px solid #888;border-right:1px solid #e6e6e6;border-bottom:1px solid #e6e6e6"></div>
<svg class="a" style="left:1343px;top:161px" width="17" height="17" viewBox="0 0 17 17" shape-rendering="auto"><path d="M0 2 L3 5 M0 5.5 H3.5 M3 0 V5 M0.5 8.5 L3 6.5" stroke="#ffff00" stroke-width="1" fill="none"/><path d="M5.5 5.5 V4 Q5.5 1 8.5 1 Q11.5 1 11.5 4 V8" fill="none" stroke="#000" stroke-width="3"/><path d="M5.5 5.5 V4 Q5.5 1 8.5 1 Q11.5 1 11.5 4 V8" fill="none" stroke="#c8c8c8" stroke-width="1"/><path d="M4.5 7.5 H14 L15.5 9 V13.5 L13.5 15.5 H5.5 L3.5 13.5 V9 Z" fill="#b4b4b4" stroke="#000" stroke-width="1.2"/><path d="M4 10.5 H15 M4 12.5 H15" stroke="#e4e4e4" stroke-width="0.8"/><path d="M7.5 9 H11 V10.5 H10 V14 H8.5 V10.5 H7.5 Z" fill="#000"/></svg>
<svg class="a" style="left:1221px;top:175px" width="13" height="13" viewBox="0 0 13 13" shape-rendering="auto"><rect x="0.5" y="0.5" width="12" height="12" fill="#fff" stroke="#333" stroke-width="1"/></svg>
<div class="t b" style="left:1238px;top:176px;font-size:12px;letter-spacing:0.11px">ORI >> MOD</div>
<svg class="a" style="left:1221px;top:191px" width="13" height="13" viewBox="0 0 13 13" shape-rendering="auto"><rect x="0.5" y="0.5" width="12" height="12" fill="#fff" stroke="#333" stroke-width="1"/><path d="M2.5 6 L5 8.5 L10.5 3" fill="none" stroke="#404040" stroke-width="1.2"/></svg>
<div class="t b" style="left:1238px;top:192px;font-size:12px;letter-spacing:0.09px">Max var.</div>
<div class="fld" style="left:1297px;top:188px;width:34px;height:21px"></div>
<div class="t b" style="left:1301px;top:192px;font-size:12px;letter-spacing:0.65px">15</div>
<div class="a" style="left:1333px;top:189px;width:14px;height:8px;background:#e8e8e8;border:1px solid #c0c0c0"></div><div class="a" style="left:1333px;top:200px;width:14px;height:8px;background:#e8e8e8;border:1px solid #c0c0c0"></div><svg class="a" style="left:1336px;top:192px" width="7" height="4" viewBox="0 0 7 4" shape-rendering="crispEdges"><path d="M0 3.5 L3.5 0 L7 3.5Z" fill="#000" shape-rendering="auto"/></svg>
<svg class="a" style="left:1336px;top:202px" width="7" height="4" viewBox="0 0 7 4" shape-rendering="crispEdges"><path d="M0 0 L3.5 3.5 L7 0Z" fill="#000" shape-rendering="auto"/></svg>

<div class="grp" style="left:1218px;top:221px;width:160px;height:221px"></div>
<div class="t b" style="left:1226px;top:217px;font-size:12px;letter-spacing:-0.06px;padding:0 3px;background:#f0f0f0">Visualizzazione</div>
<div class="a" style="left:1223px;top:234px;width:143px;height:31px;border-top:1px solid #fff;border-left:1px solid #fff;border-bottom:1px solid #a0a0a0;border-right:1px solid #a0a0a0"></div>
<div class="a" style="left:1223px;top:265px;width:142px;height:1px;background:#fff"></div>
<div class="a" style="left:1223px;top:265px;width:143px;height:75px;border-top:1px solid #fff;border-left:1px solid #fff;border-bottom:1px solid #a0a0a0;border-right:1px solid #a0a0a0"></div>
<div class="a" style="left:1223px;top:340px;width:142px;height:1px;background:#fff"></div>
<div class="a" style="left:1223px;top:340px;width:143px;height:33px;border-top:1px solid #fff;border-left:1px solid #fff;border-bottom:1px solid #a0a0a0;border-right:1px solid #a0a0a0"></div>
<svg class="a" style="left:1227px;top:244px" width="13" height="13" viewBox="0 0 13 13" shape-rendering="auto"><circle cx="6.5" cy="6.5" r="6" fill="#fff" stroke="#333" stroke-width="1"/><circle cx="6.5" cy="6.5" r="3.3" fill="#333"/></svg>
<div class="t b" style="left:1244px;top:246px;font-size:12px;letter-spacing:0.02px">IEEE</div>
<svg class="a" style="left:1284px;top:244px" width="13" height="13" viewBox="0 0 13 13" shape-rendering="auto"><circle cx="6.5" cy="6.5" r="6" fill="#fff" stroke="#333" stroke-width="1"/></svg>
<div class="t b" style="left:1302px;top:246px;font-size:12px;letter-spacing:-0.18px">Motorola</div>
<svg class="a" style="left:1227px;top:269px" width="13" height="13" viewBox="0 0 13 13" shape-rendering="auto"><circle cx="6.5" cy="6.5" r="6" fill="#fff" stroke="#333" stroke-width="1"/></svg>
<div class="t b" style="left:1244px;top:270px;font-size:12px;letter-spacing:0.23px">8 bit</div>
<svg class="a" style="left:1314px;top:269px" width="13" height="13" viewBox="0 0 13 13" shape-rendering="auto"><rect x="0.5" y="0.5" width="12" height="12" fill="#fff" stroke="#333" stroke-width="1"/></svg>
<div class="t b" style="left:1331px;top:270px;font-size:12px;letter-spacing:1.28px">+/-</div>
<svg class="a" style="left:1227px;top:287px" width="13" height="13" viewBox="0 0 13 13" shape-rendering="auto"><circle cx="6.5" cy="6.5" r="6" fill="#fff" stroke="#333" stroke-width="1"/><circle cx="6.5" cy="6.5" r="3.3" fill="#333"/></svg>
<div class="t b" style="left:1244px;top:288px;font-size:12px;letter-spacing:0.25px">16 bit</div>
<svg class="a" style="left:1227px;top:305px" width="13" height="13" viewBox="0 0 13 13" shape-rendering="auto"><circle cx="6.5" cy="6.5" r="6" fill="#fff" stroke="#333" stroke-width="1"/></svg>
<div class="t b" style="left:1244px;top:306px;font-size:12px;letter-spacing:0.25px">32 bit</div>
<svg class="a" style="left:1227px;top:322px" width="13" height="13" viewBox="0 0 13 13" shape-rendering="auto"><circle cx="6.5" cy="6.5" r="6" fill="#fff" stroke="#333" stroke-width="1"/></svg>
<div class="t b" style="left:1244px;top:323px;font-size:12px;letter-spacing:-0.21px">Virgola mobile</div>
<div class="t b" style="left:1227px;top:352px;font-size:12px;letter-spacing:-0.28px">Allineamento:</div>
<div class="fld" style="left:1315px;top:347px;width:41px;height:22px"></div>
<div class="t b" style="left:1319px;top:352px;font-size:12px;letter-spacing:0.00px">0</div>
<div class="a" style="left:1339px;top:350px;width:13px;height:7px;background:#e8e8e8;border:1px solid #c0c0c0"></div><div class="a" style="left:1339px;top:359px;width:13px;height:7px;background:#e8e8e8;border:1px solid #c0c0c0"></div><svg class="a" style="left:1342px;top:352px" width="7" height="4" viewBox="0 0 7 4" shape-rendering="crispEdges"><path d="M0 3.5 L3.5 0 L7 3.5Z" fill="#000" shape-rendering="auto"/></svg>
<svg class="a" style="left:1342px;top:360px" width="7" height="4" viewBox="0 0 7 4" shape-rendering="crispEdges"><path d="M0 0 L3.5 3.5 L7 0Z" fill="#000" shape-rendering="auto"/></svg>

<svg class="a" style="left:1227px;top:381px" width="13" height="13" viewBox="0 0 13 13" shape-rendering="auto"><rect x="0.5" y="0.5" width="12" height="12" fill="#fff" stroke="#333" stroke-width="1"/><path d="M2.5 6 L5 8.5 L10.5 3" fill="none" stroke="#404040" stroke-width="1.2"/></svg>
<div class="t b" style="left:1243px;top:382px;font-size:12px;letter-spacing:-0.00px">Usa info driver</div>
<svg class="a" style="left:1227px;top:397px" width="13" height="13" viewBox="0 0 13 13" shape-rendering="auto"><rect x="0.5" y="0.5" width="12" height="12" fill="#fff" stroke="#333" stroke-width="1"/><path d="M2.5 6 L5 8.5 L10.5 3" fill="none" stroke="#404040" stroke-width="1.2"/></svg>
<div class="t b" style="left:1243px;top:398px;font-size:12px;letter-spacing:-0.11px">Usa ultima mappa</div>
<div class="t b" style="left:1224px;top:422px;font-size:12px;letter-spacing:-0.22px">Zoom V:</div>
<div class="a" style="left:1282px;top:419px;width:77px;height:15px;background:#e6e9ea;border:1px solid #d9d9d9"></div>
<div class="a" style="left:1290px;top:417px;width:8px;height:19px;background:#0078d7"></div>

<!-- vertical scrollbar -->
<div class="a" style="left:1199px;top:194px;width:18px;height:469px;background:#f0f0f0;border-top:1px solid #a0a0a0;border-left:1px solid #fff"></div>
<svg class="a" style="left:1205px;top:200px" width="8" height="6" viewBox="0 0 8 6" shape-rendering="auto"><path d="M0.8 5.2 L4 1.8 L7.2 5.2" fill="none" stroke="#606060" stroke-width="1.6"/></svg>
<div class="a" style="left:1201px;top:211px;width:15px;height:17px;background:#cdcdcd"></div>
<svg class="a" style="left:1205px;top:652px" width="8" height="6" viewBox="0 0 8 6" shape-rendering="auto"><path d="M0.8 0.8 L4 4.2 L7.2 0.8" fill="none" stroke="#606060" stroke-width="1.6"/></svg>
<!-- bottom bar -->
<div class="a" style="left:4px;top:662px;width:1213px;height:2px;background:#fff"></div>
<div class="a" style="left:1216px;top:662px;width:1px;height:48px;background:#a0a0a0"></div>
<div class="a" style="left:4px;top:709px;width:1213px;height:1px;background:#a0a0a0"></div>
<div class="a" style="left:6px;top:665px;width:22px;height:42px;background:#e1e1e1;border:1px solid #a8a8a8"></div>
<svg class="a" style="left:11px;top:681px" width="10" height="9" viewBox="0 0 10 9" shape-rendering="crispEdges"><path d="M0 4 L4 0 V8 Z" fill="#000"/><rect x="6" y="0.5" width="2" height="8" fill="#0000ff"/></svg>
<div class="a" style="left:30px;top:664px;width:834px;height:21px;background:#f0f0f0;border-top:1px solid #a0a0a0;border-left:1px solid #a0a0a0"></div>
<div class="a" style="left:31px;top:665px;width:833px;height:1px;background:#fff"></div>
<svg class="a" style="left:36px;top:670px" width="7" height="8" viewBox="0 0 7 8" shape-rendering="auto"><path d="M5.8 0.8 L1.5 4 L5.8 7.2" fill="none" stroke="#606060" stroke-width="2"/></svg>
<svg class="a" style="left:851px;top:670px" width="7" height="8" viewBox="0 0 7 8" shape-rendering="auto"><path d="M1.2 0.8 L5.5 4 L1.2 7.2" fill="none" stroke="#606060" stroke-width="2"/></svg>
<div class="a" style="left:321px;top:666px;width:17px;height:18px;background:#a6a6a6"></div>
<div class="a" style="left:30px;top:687px;width:834px;height:21px;background:#f0f0f0;border-top:1px solid #a0a0a0;border-left:1px solid #a0a0a0"></div>
<div class="a" style="left:31px;top:688px;width:833px;height:1px;background:#fff"></div>
<svg class="a" style="left:36px;top:693px" width="7" height="8" viewBox="0 0 7 8" shape-rendering="auto"><path d="M5.8 0.8 L1.5 4 L5.8 7.2" fill="none" stroke="#606060" stroke-width="2"/></svg>
<svg class="a" style="left:851px;top:693px" width="7" height="8" viewBox="0 0 7 8" shape-rendering="auto"><path d="M1.2 0.8 L5.5 4 L1.2 7.2" fill="none" stroke="#606060" stroke-width="2"/></svg>
<div class="a" style="left:321px;top:689px;width:17px;height:18px;background:#cdcdcd"></div>
<div class="a" style="left:866px;top:665px;width:22px;height:42px;background:#e1e1e1;border:1px solid #a8a8a8"></div>
<svg class="a" style="left:873px;top:681px" width="9" height="9" viewBox="0 0 9 9" shape-rendering="crispEdges"><rect x="0" y="0.5" width="2" height="8" fill="#0000ff"/><path d="M4 0 L8 4.5 L4 9 Z" fill="#000"/></svg>
<div class="a" style="left:890px;top:665px;width:22px;height:42px;background:#e1e1e1;border:1px solid #a8a8a8"></div>
<svg class="a" style="left:894px;top:681px" width="12" height="9" viewBox="0 0 12 9" shape-rendering="crispEdges"><path d="M4 0 L0 4.5 L4 9 Z" fill="#000"/><rect x="6" y="0.5" width="2" height="8" fill="#0000ff"/><rect x="9.5" y="0.5" width="2" height="8" fill="#ff0000"/></svg>
<div class="a" style="left:914px;top:665px;width:22px;height:42px;background:#e1e1e1;border:1px solid #a8a8a8"></div>
<svg class="a" style="left:919px;top:681px" width="13" height="9" viewBox="0 0 13 9" shape-rendering="crispEdges"><rect x="0.5" y="0.5" width="2" height="8" fill="#ff0000"/><rect x="4" y="0.5" width="2" height="8" fill="#0000ff"/><path d="M8 0 L12 4.5 L8 9 Z" fill="#000"/></svg>
<div class="a" style="left:940px;top:665px;width:22px;height:42px;background:#cccccc;border:1px solid #c4c4c4"></div>
<svg class="a" style="left:944px;top:679px" width="15" height="14" viewBox="0 0 15 14" shape-rendering="crispEdges"><rect x="0" y="0" width="1" height="13" fill="#000"/><g fill="#a0a0a0"><rect x="3" y="2" width="10" height="2"/><rect x="3" y="7" width="10" height="2"/><rect x="4" y="0" width="3" height="12"/><rect x="2" y="11" width="12" height="1"/></g><g fill="#e8e8e8"><rect x="5" y="3" width="1" height="1"/><rect x="5" y="8" width="1" height="1"/><rect x="3" y="12" width="1" height="1"/><rect x="7" y="12" width="1" height="1"/><rect x="11" y="12" width="1" height="1"/></g></svg>
<div class="a" style="left:964px;top:665px;width:22px;height:42px;background:#cccccc;border:1px solid #c4c4c4"></div>
<svg class="a" style="left:967px;top:679px" width="15" height="14" viewBox="0 0 15 14" shape-rendering="crispEdges"><rect x="14" y="0" width="1" height="13" fill="#000"/><g transform="translate(15,0) scale(-1,1)"><g fill="#a0a0a0"><rect x="3" y="2" width="10" height="2"/><rect x="3" y="7" width="10" height="2"/><rect x="4" y="0" width="3" height="12"/><rect x="2" y="11" width="12" height="1"/></g><g fill="#e8e8e8"><rect x="5" y="3" width="1" height="1"/><rect x="5" y="8" width="1" height="1"/><rect x="3" y="12" width="1" height="1"/><rect x="7" y="12" width="1" height="1"/><rect x="11" y="12" width="1" height="1"/></g></g></svg>
<div class="a" style="left:990px;top:665px;width:58px;height:20px;background:#e1e1e1;border:1px solid #a8a8a8"></div>
<svg class="a" style="left:993px;top:667px" width="17" height="17" viewBox="0 0 17 17" shape-rendering="auto"><path d="M0 2 L3 5 M0 5.5 H3.5 M3 0 V5 M0.5 8.5 L3 6.5" stroke="#ffff00" stroke-width="1" fill="none"/><path d="M5.5 5.5 V4 Q5.5 1 8.5 1 Q11.5 1 11.5 4 V8" fill="none" stroke="#000" stroke-width="3"/><path d="M5.5 5.5 V4 Q5.5 1 8.5 1 Q11.5 1 11.5 4 V8" fill="none" stroke="#c8c8c8" stroke-width="1"/><path d="M4.5 7.5 H14 L15.5 9 V13.5 L13.5 15.5 H5.5 L3.5 13.5 V9 Z" fill="#b4b4b4" stroke="#000" stroke-width="1.2"/><path d="M4 10.5 H15 M4 12.5 H15" stroke="#e4e4e4" stroke-width="0.8"/><path d="M7.5 9 H11 V10.5 H10 V14 H8.5 V10.5 H7.5 Z" fill="#000"/></svg>
<div class="t b" style="left:1015px;top:670px;font-size:12px;letter-spacing:-0.17px">ORI</div>
<div class="a" style="left:990px;top:687px;width:58px;height:20px;background:#e1e1e1;border:1px solid #a8a8a8"></div>
<svg class="a" style="left:993px;top:689px" width="17" height="17" viewBox="0 0 17 17" shape-rendering="auto"><path d="M0 2 L3 5 M0 5.5 H3.5 M3 0 V5 M0.5 8.5 L3 6.5" stroke="#ffff00" stroke-width="1" fill="none"/><path d="M5.5 5.5 V4 Q5.5 1 8.5 1 Q11.5 1 11.5 4 V8" fill="none" stroke="#000" stroke-width="3"/><path d="M5.5 5.5 V4 Q5.5 1 8.5 1 Q11.5 1 11.5 4 V8" fill="none" stroke="#c8c8c8" stroke-width="1"/><path d="M4.5 7.5 H14 L15.5 9 V13.5 L13.5 15.5 H5.5 L3.5 13.5 V9 Z" fill="#b4b4b4" stroke="#000" stroke-width="1.2"/><path d="M4 10.5 H15 M4 12.5 H15" stroke="#e4e4e4" stroke-width="0.8"/><path d="M7.5 9 H11 V10.5 H10 V14 H8.5 V10.5 H7.5 Z" fill="#000"/></svg>
<div class="t b" style="left:1015px;top:692px;font-size:12px;letter-spacing:-0.50px">MOD</div>
<div class="a" style="left:1051px;top:665px;width:44px;height:20px;background:#e1e1e1;border:1px solid #a8a8a8"></div>
<svg class="a" style="left:1064px;top:671px" width="18" height="9" viewBox="0 0 18 9"><path d="M4 0 L0 4.5 L4 9 Z" fill="#000"/><rect x="6" y="0.5" width="2" height="8" fill="#0000ff"/><path d="M10 8.5 V0.5 H12 L13.5 4 L15 0.5 H17 V8.5 H15.5 V3.5 L14 6.5 H13 L11.5 3.5 V8.5 Z" fill="#000"/></svg>
<div class="a" style="left:1097px;top:665px;width:44px;height:20px;background:#e1e1e1;border:1px solid #a8a8a8"></div>
<svg class="a" style="left:1111px;top:671px" width="17" height="9" viewBox="0 0 17 9"><path d="M0 8.5 V0.5 H2 L3.5 4 L5 0.5 H7 V8.5 H5.5 V3.5 L4 6.5 H3 L1.5 3.5 V8.5 Z" fill="#000"/><rect x="9" y="0.5" width="2" height="8" fill="#0000ff"/><path d="M12 0 L16 4.5 L12 9 Z" fill="#000"/></svg>
<div class="fld" style="left:1051px;top:687px;width:65px;height:21px;border-color:#7a7a7a"></div>
<div class="t b" style="left:1054px;top:691px;font-size:12px;letter-spacing:-0.20px">0B33CC</div>
<div class="a" style="left:1119px;top:687px;width:22px;height:20px;background:#e1e1e1;border:1px solid #a8a8a8"></div>
<div class="t b" style="left:1121px;top:692px;font-size:12px;letter-spacing:-1.6px;color:#1a1a1a">GO</div>
<div class="a" style="left:1144px;top:665px;width:22px;height:42px;background:#e1e1e1;border:1px solid #a8a8a8"></div>
<svg class="a" style="left:1147px;top:678px" width="16" height="15" viewBox="0 0 16 15" shape-rendering="crispEdges"><rect x="2" y="0" width="1" height="13" fill="#000"/><rect x="2" y="12" width="13" height="1" fill="#000"/><g fill="#606060"><rect x="0" y="2" width="2" height="1"/><rect x="0" y="6" width="2" height="1"/><rect x="0" y="10" width="2" height="1"/><rect x="4" y="13" width="1" height="1"/><rect x="8" y="13" width="1" height="1"/><rect x="12" y="13" width="1" height="1"/></g><rect x="3" y="3" width="12" height="2" fill="#0000ff"/><rect x="5" y="1" width="3" height="5" fill="#0000ff"/><rect x="3" y="9" width="12" height="2" fill="#ff0000"/><rect x="5" y="7" width="3" height="5" fill="#ff0000"/></svg>
<div class="a" style="left:1168px;top:665px;width:22px;height:42px;background:#e1e1e1;border:1px solid #a8a8a8"></div>
<svg class="a" style="left:1171px;top:682px" width="14" height="8" viewBox="0 0 14 8" shape-rendering="crispEdges"><rect x="0" y="0" width="2" height="8" fill="#000"/><path d="M8 0 L4 4 L8 8 Z M13 0 L9 4 L13 8 Z" fill="#000"/></svg>
<div class="a" style="left:1192px;top:665px;width:22px;height:42px;background:#e1e1e1;border:1px solid #a8a8a8"></div>
<svg class="a" style="left:1196px;top:682px" width="14" height="8" viewBox="0 0 14 8" shape-rendering="crispEdges"><path d="M0 0 L4 4 L0 8 Z M5 0 L9 4 L5 8 Z" fill="#000"/><rect x="11" y="0" width="2" height="8" fill="#000"/></svg>
<!-- memo -->
<div class="grp" style="left:1217px;top:631px;width:160px;height:79px"></div>
<div class="t b" style="left:1225px;top:625px;font-size:12px;letter-spacing:-0.05px;padding:0 3px;background:#f0f0f0">Memo indirizzi</div>
<div class="a" style="left:1227px;top:639px;width:122px;height:71px;border-top:1px solid #a0a0a0;border-left:1px solid #a0a0a0"></div>
<div class="a" style="left:1228px;top:640px;width:121px;height:1px;background:#fff"></div>
<div class="t b" style="left:1221.8px;width:40px;text-align:center;top:648.5px;font-size:12px;color:#a0a0a0;letter-spacing:0.4px">1</div>
<div class="t b" style="left:1244.3px;width:40px;text-align:center;top:648.5px;font-size:12px;color:#a0a0a0;letter-spacing:0.4px">2</div>
<div class="t b" style="left:1267.5px;width:40px;text-align:center;top:648.5px;font-size:12px;color:#a0a0a0;letter-spacing:0.4px">3</div>
<div class="t b" style="left:1290.8px;width:40px;text-align:center;top:648.5px;font-size:12px;color:#a0a0a0;letter-spacing:0.4px">4</div>
<div class="t b" style="left:1314.4px;width:40px;text-align:center;top:648.5px;font-size:12px;color:#a0a0a0;letter-spacing:0.4px">5</div>
<div class="t b" style="left:1221.8px;width:40px;text-align:center;top:670.2px;font-size:12px;color:#a0a0a0;letter-spacing:0.4px">6</div>
<div class="t b" style="left:1244.3px;width:40px;text-align:center;top:670.2px;font-size:12px;color:#a0a0a0;letter-spacing:0.4px">7</div>
<div class="t b" style="left:1267.5px;width:40px;text-align:center;top:670.2px;font-size:12px;color:#a0a0a0;letter-spacing:0.4px">8</div>
<div class="t b" style="left:1290.8px;width:40px;text-align:center;top:670.2px;font-size:12px;color:#a0a0a0;letter-spacing:0.4px">9</div>
<div class="t b" style="left:1313.8px;width:40px;text-align:center;top:670.2px;font-size:12px;color:#a0a0a0;letter-spacing:0.4px">10</div>
<div class="t b" style="left:1221.0px;width:40px;text-align:center;top:692.2px;font-size:12px;color:#a0a0a0;letter-spacing:0.4px">11</div>
<div class="t b" style="left:1244.5px;width:40px;text-align:center;top:692.2px;font-size:12px;color:#a0a0a0;letter-spacing:0.4px">12</div>
<svg class="a" style="left:1279px;top:689px" width="18" height="18" viewBox="0 0 18 18" shape-rendering="crispEdges"><path d="M7 1 H13 V2 H14 V3 H15 V4 H16 V17 H7 Z" fill="#000"/><path d="M8 2 H12.5 V4.5 H15 V16 H8 Z" fill="#fff"/><rect x="10" y="3" width="2" height="1" fill="#000"/><rect x="12" y="6" width="2" height="1" fill="#000"/><rect x="12" y="14" width="2" height="1" fill="#000"/><rect x="10" y="14" width="1" height="1" fill="#000"/><rect x="13" y="11" width="1" height="1" fill="#000"/><path d="M2 1 L3 1 L12 10 L12 12 L10 12 L1 3 Z" fill="#000"/><path d="M3 2 L11 10 L10 11 L2 3 Z" fill="#ffff00"/><rect x="1.5" y="1.5" width="1.5" height="1.5" fill="#ff0000"/><path d="M2 6 H7 V7 H12 V10 H10 V11 H9 V12 H8 V13 H3 V14 H2 Z" fill="#000"/><path d="M3 7 H6 V8 H11 V9 H8 V10 H7 V11 H6 V12 H3 Z" fill="#ffff00"/><rect x="1" y="6" width="1" height="8" fill="#00ffff"/><rect x="0" y="6" width="1" height="8" fill="#000"/></svg>
<!-- status -->
<div class="a" style="left:353px;top:712px;width:1px;height:17px;background:#d7d7d7"></div>
<div class="a" style="left:573px;top:712px;width:1px;height:17px;background:#d7d7d7"></div>
<div class="a" style="left:673px;top:712px;width:1px;height:17px;background:#d7d7d7"></div>
<div class="t" style="left:678px;top:715px;font-size:12px;letter-spacing:-0.12px">Checksum: NO</div>
<div class="a" style="left:4px;top:729px;width:1362px;height:1px;background:#fff"></div>
<div class="a" style="left:0;top:730px;width:1366px;height:2px;background:#3c3c3c"></div>
<div class="a" style="left:0;top:730px;width:4px;height:2px;background:#fff"></div>
<div class="a" style="left:52px;top:730px;width:343px;height:2px;background:#c4c4c4"></div>
<div class="a" style="left:789px;top:730px;width:48px;height:2px;background:#7a7a7a"></div>
</body></html>
